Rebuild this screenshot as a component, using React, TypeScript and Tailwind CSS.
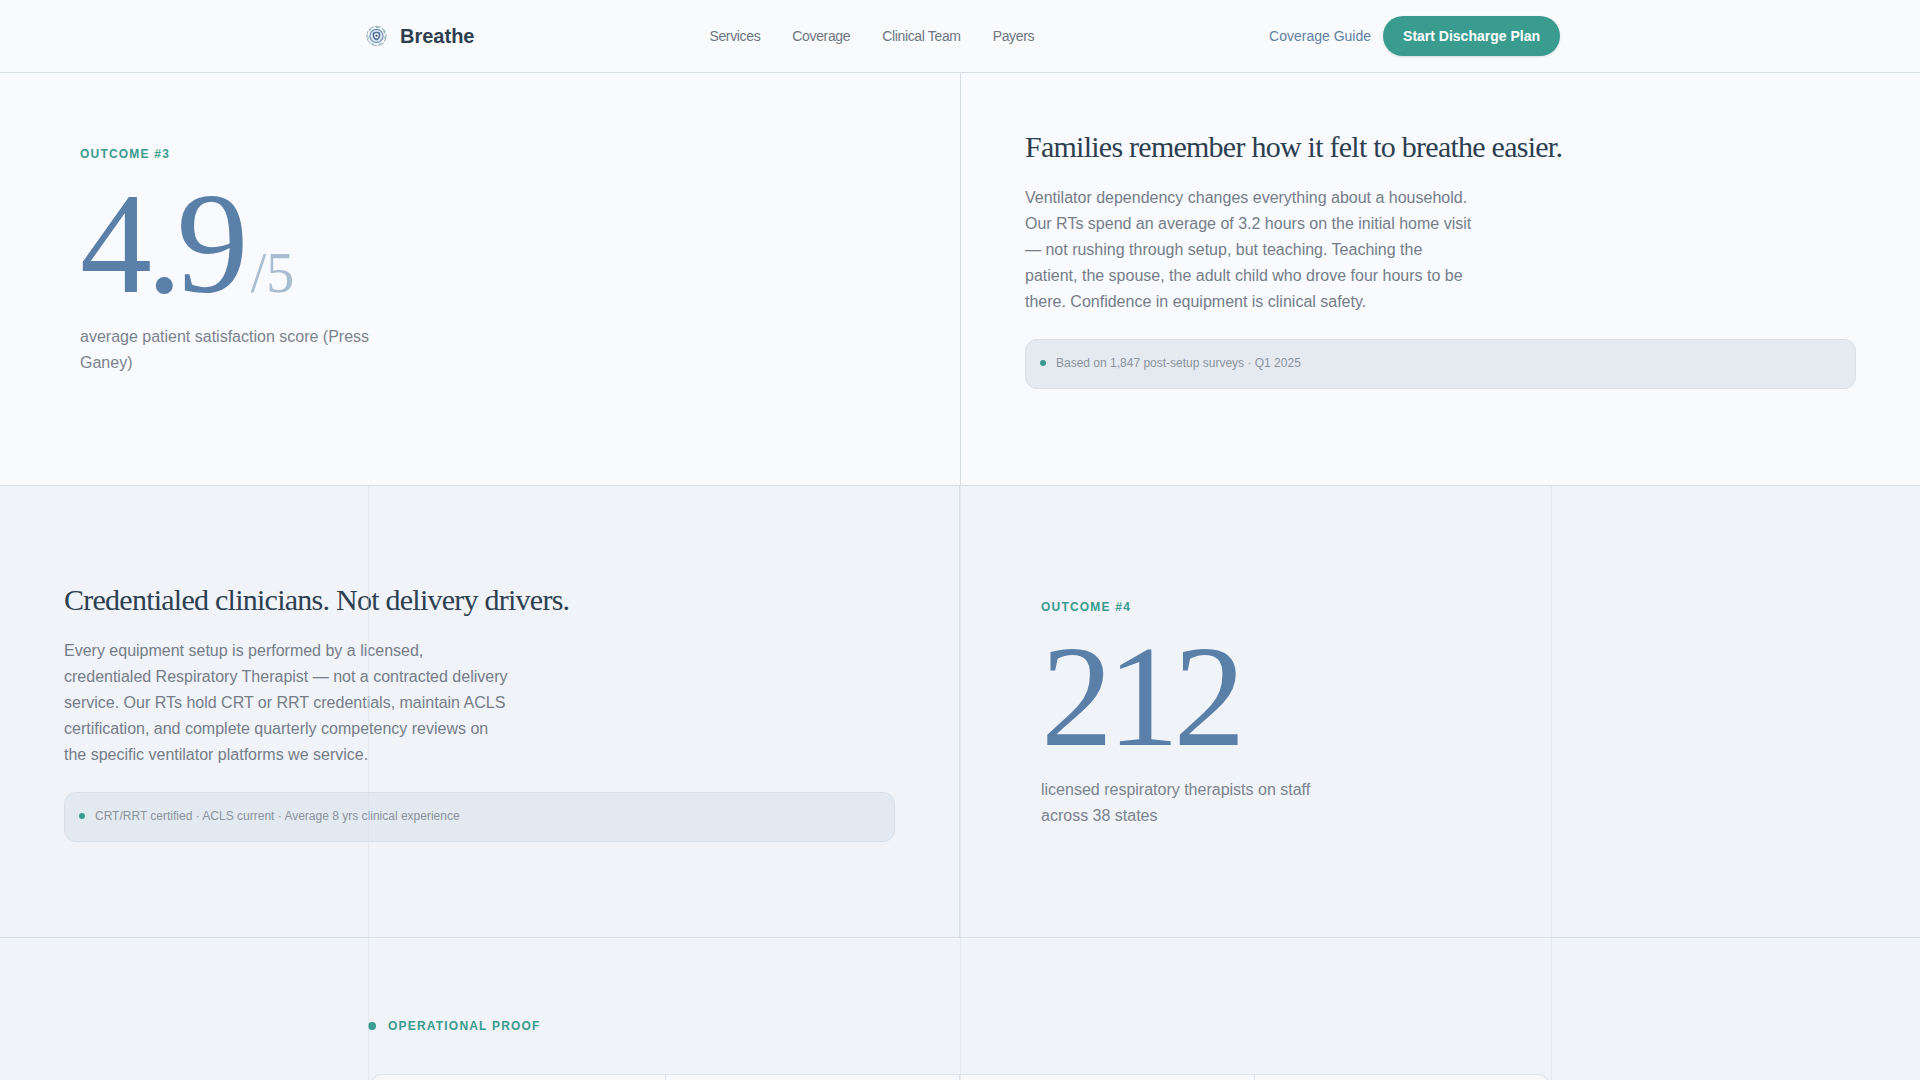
const navLinks = ["Services", "Coverage", "Clinical Team", "Payers"];

function Logo() {
  return (
    <svg width="32" height="32" viewBox="0 0 32 32" fill="none">
      <circle cx="16.5" cy="16" r="9.6" stroke="#a9b8c4" strokeWidth="1.1" strokeDasharray="6 1.2" />
      <circle cx="16.5" cy="16" r="8.6" stroke="#3a9b8f" strokeWidth="0.9" strokeDasharray="3 5" opacity="0.7" />
      <circle cx="16.5" cy="16" r="6.6" fill="#dfe9f3" stroke="#6f90b3" strokeWidth="1.2" />
      <path d="M16.5 11.4l3.8 1.3v2.9c0 2.4-1.6 4-3.8 5-2.2-1-3.8-2.6-3.8-5v-2.9z" fill="#4f7299" />
      <path d="M16.5 13.1l2.2.8v1.8c0 1.4-1 2.3-2.2 2.9-1.2-.6-2.2-1.5-2.2-2.9v-1.8z" fill="#f1f5f9" />
      <circle cx="16.5" cy="15.8" r="1" fill="#2d3f55" />
    </svg>
  );
}

function Chip({ text }: { text: string }) {
  return (
    <div className="flex h-[50px] items-center gap-[10px] rounded-[12px] border border-[#d8dfe8] bg-[#e0e6ee]/80 px-[14px] pb-[2px]">
      <span className="h-[6px] w-[6px] rounded-full bg-[#3a9b8f]" />
      <span className="text-[12px] text-[#8a929d]">{text}</span>
    </div>
  );
}

function Stat({ label, value, suffix, caption }: { label: string; value: string; suffix?: string; caption: string }) {
  return (
    <div>
      <div className="text-[12px] font-bold leading-[18px] tracking-[0.1em] text-[#3a9b8f]">{label}</div>
      <div className="mt-[9px] flex h-[144px] items-baseline font-['Liberation_Serif',serif] leading-[144px]">
        <span className="text-[144px] tracking-[-0.04em] text-[#5a7fa8]">{value}</span>
        {suffix && <span className="ml-[8px] text-[56px] text-[#a8bcd2]">{suffix}</span>}
      </div>
      <p className="mt-[8px] max-w-[300px] text-[16px] leading-[26px] text-[#7b838e]">{caption}</p>
    </div>
  );
}

function Story({ title, body, note }: { title: string; body: string; note: string }) {
  return (
    <div>
      <h2 className="font-['Liberation_Serif',serif] text-[30px] font-normal leading-[38px] tracking-[-0.025em] text-[#2d3f50]">{title}</h2>
      <p className="mt-[19px] max-w-[448px] text-[16px] leading-[26px] text-[#757d89]">{body}</p>
      <div className="mt-[24px]">
        <Chip text={note} />
      </div>
    </div>
  );
}

export default function App() {
  return (
    <div className="relative h-screen overflow-hidden bg-[#f0f3f8] font-['Liberation_Sans',Arial,sans-serif]">
      <header className="relative z-20 flex h-[73px] items-center justify-center border-b border-[#d8dee6] bg-[#f8fafc]">
        <div className="flex w-[1200px] items-center justify-between">
          <div className="flex items-center gap-[8px]">
            <Logo />
            <span className="text-[20px] font-bold text-[#2d3f50]">Breathe</span>
          </div>
          <nav className="flex gap-[32px]">
            {navLinks.map((l) => (
              <a key={l} className="text-[14px] tracking-[-0.025em] text-[#6f7683]">{l}</a>
            ))}
          </nav>
          <div className="flex items-center gap-[12px]">
            <a className="text-[14px] text-[#5f7fa3]">Coverage Guide</a>
            <button className="h-[40px] rounded-full bg-[#3a9b8f] px-[20px] text-[14px] font-bold text-white shadow-sm">Start Discharge Plan</button>
          </div>
        </div>
      </header>

      <section className="relative z-20 grid h-[413px] grid-cols-2 border-b border-[#d8dee6] bg-[#f8fafd]">
        <div className="pl-[80px] pt-[72px]">
          <Stat label="OUTCOME #3" value="4.9" suffix="/5" caption="average patient satisfaction score (Press Ganey)" />
        </div>
        <div className="border-l border-[#d8dee6] pl-[64px] pr-[64px] pt-[55px]">
          <Story
            title="Families remember how it felt to breathe easier."
            body="Ventilator dependency changes everything about a household. Our RTs spend an average of 3.2 hours on the initial home visit — not rushing through setup, but teaching. Teaching the patient, the spouse, the adult child who drove four hours to be there. Confidence in equipment is clinical safety."
            note="Based on 1,847 post-setup surveys · Q1 2025"
          />
        </div>
      </section>

      <section className="relative z-0 grid h-[452px] grid-cols-2 border-b border-[#d8dee6]">
        <div className="border-r border-[#d8dee6] pl-[64px] pr-[64px] pt-[95px]">
          <Story
            title="Credentialed clinicians. Not delivery drivers."
            body="Every equipment setup is performed by a licensed, credentialed Respiratory Therapist — not a contracted delivery service. Our RTs hold CRT or RRT credentials, maintain ACLS certification, and complete quarterly competency reviews on the specific ventilator platforms we service."
            note="CRT/RRT certified · ACLS current · Average 8 yrs clinical experience"
          />
        </div>
        <div className="pl-[81px] pt-[112px]">
          <Stat label="OUTCOME #4" value="212" caption="licensed respiratory therapists on staff across 38 states" />
        </div>
      </section>

      <section className="mx-auto w-[1184px] border-t border-[#f6f8fb] pt-[78px]">
        <div className="flex items-center gap-[12px]">
          <span className="h-[8px] w-[8px] rounded-full bg-[#3a9b8f]" />
          <span className="text-[12px] font-bold tracking-[0.1em] text-[#3a9b8f]">OPERATIONAL PROOF</span>
        </div>
        <div className="mx-[2px] mt-[39px] grid h-[200px] grid-cols-4 rounded-[12px] border border-[#dde3ea] bg-[#f6f8fb]">
          <div className="border-r border-[#dde3ea]" />
          <div className="border-r border-[#dde3ea]" />
          <div className="border-r border-[#dde3ea]" />
          <div />
        </div>
      </section>

      <div className="pointer-events-none absolute inset-0 z-10">
        <div className="absolute bottom-0 left-[368px] top-0 w-px bg-[#d8dee6]/50" />
        <div className="absolute bottom-0 left-[960px] top-0 w-px bg-[#d8dee6]/50" />
        <div className="absolute bottom-0 left-[1551px] top-0 w-px bg-[#d8dee6]/50" />
      </div>
    </div>
  );
}
